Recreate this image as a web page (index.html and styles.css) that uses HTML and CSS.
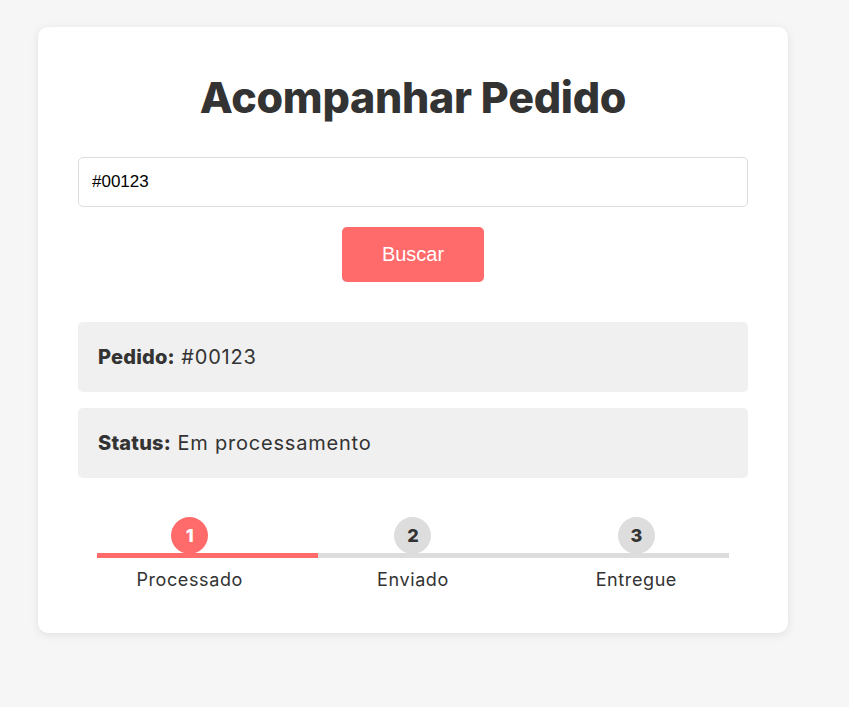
FILE: index.html
```html
<!DOCTYPE html>
<html lang="pt-BR">
<head>
<meta charset="utf-8">
<title>Acompanhar Pedido</title>
<link rel="stylesheet" href="styles.css">
</head>
<body>
  <main class="card">
    <h1 class="title">Acompanhar Pedido</h1>
    <input class="order-input" type="text" value="#00123">
    <div class="actions">
      <button class="btn" type="button">Buscar</button>
    </div>
    <div class="info-list">
      <div class="info"><strong>Pedido:</strong> #00123</div>
      <div class="info"><strong>Status:</strong> Em processamento</div>
    </div>
    <div class="progress">
      <div class="track"><div class="fill" style="width:35%"></div></div>
      <div class="step active">
        <span class="dot">1</span>
        <span class="label">Processado</span>
      </div>
      <div class="step">
        <span class="dot">2</span>
        <span class="label">Enviado</span>
      </div>
      <div class="step">
        <span class="dot">3</span>
        <span class="label">Entregue</span>
      </div>
    </div>
  </main>
</body>
</html>
```
FILE: styles.css
```css
* { box-sizing: border-box; }

html, body { margin: 0; }

body {
  background: #f6f6f6;
  padding: 27px 38px;
  font-family: Inter, "Noto Sans", sans-serif;
  color: #333;
}

.card {
  width: 750px;
  background: #fff;
  border-radius: 10px;
  box-shadow: 0 2px 10px rgba(0, 0, 0, 0.09);
  padding: 40px 40px 41px;
  display: flex;
  flex-direction: column;
}

.title {
  margin: 0 0 30px;
  font-size: 43px;
  line-height: 60px;
  font-weight: 800;
  letter-spacing: -0.3px;
  text-align: center;
  color: #333;
}

.order-input {
  display: block;
  width: 100%;
  height: 50px;
  padding: 0 13px;
  border: 1px solid #ddd;
  border-radius: 5px;
  font-family: "Liberation Sans", Arial, sans-serif;
  font-size: 17px;
  color: #000;
  outline: none;
}

.actions {
  display: flex;
  justify-content: center;
  margin-top: 20px;
}

.btn {
  background: #ff6b6b;
  color: #fff;
  border: none;
  border-radius: 5px;
  padding: 16px 40px;
  font-family: "Liberation Sans", Arial, sans-serif;
  font-size: 20px;
  line-height: 23px;
  cursor: pointer;
}

.info-list {
  margin-top: 40px;
  display: flex;
  flex-direction: column;
  gap: 16px;
}

.info {
  background: #f0f0f0;
  border-radius: 5px;
  padding: 20px;
  font-size: 20px;
  line-height: 30px;
  letter-spacing: 0.8px;
  color: #333;
}

.info strong {
  font-weight: 800;
  letter-spacing: 0.2px;
}

.progress {
  position: relative;
  margin-top: 39px;
  display: flex;
}

.track {
  position: absolute;
  left: 19px;
  right: 19px;
  top: 36px;
  height: 5px;
  background: #ddd;
  z-index: 1;
}

.fill {
  height: 100%;
  background: #ff6b6b;
}

.step {
  flex: 1;
  display: flex;
  flex-direction: column;
  align-items: center;
}

.dot {
  width: 37px;
  height: 37px;
  border-radius: 50%;
  background: #ddd;
  color: #333;
  display: flex;
  align-items: center;
  justify-content: center;
  font-size: 18px;
  font-weight: 800;
}

.step.active .dot {
  background: #ff6b6b;
  color: #fff;
}

.label {
  margin-top: 14px;
  font-size: 18px;
  line-height: 24px;
  letter-spacing: 0.6px;
  color: #333;
}
```
